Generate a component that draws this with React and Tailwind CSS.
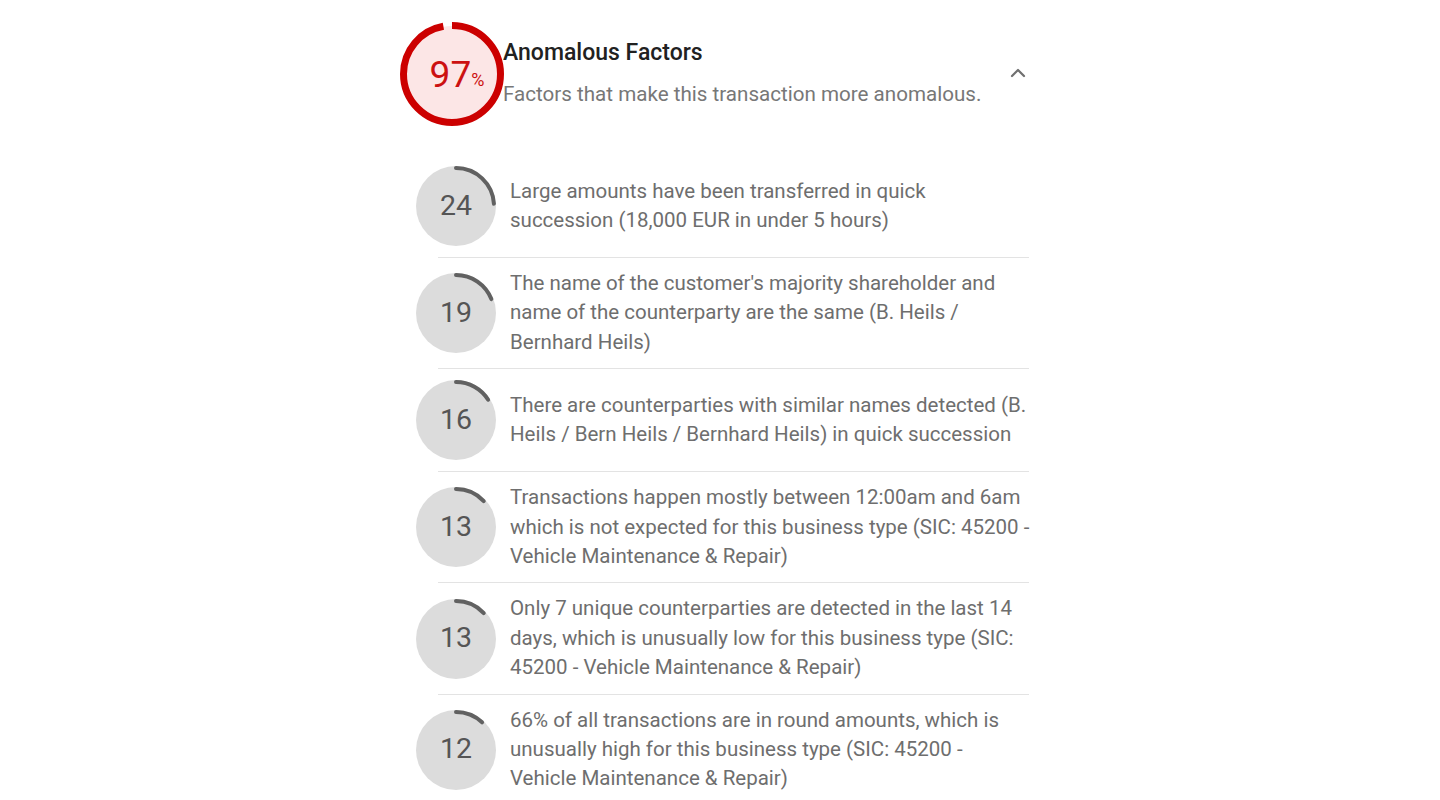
import { ChevronUp } from 'lucide-react';

const factors = [
  {
    score: 24,
    lines: ['Large amounts have been transferred in quick', 'succession (18,000 EUR in under 5 hours)'],
  },
  {
    score: 19,
    lines: [
      "The name of the customer's majority shareholder and",
      'name of the counterparty are the same (B. Heils /',
      'Bernhard Heils)',
    ],
  },
  {
    score: 16,
    lines: [
      'There are counterparties with similar names detected (B.',
      'Heils / Bern Heils / Bernhard Heils) in quick succession',
    ],
  },
  {
    score: 13,
    lines: [
      'Transactions happen mostly between 12:00am and 6am',
      'which is not expected for this business type (SIC: 45200 -',
      'Vehicle Maintenance & Repair)',
    ],
  },
  {
    score: 13,
    lines: [
      'Only 7 unique counterparties are detected in the last 14',
      'days, which is unusually low for this business type (SIC:',
      '45200 - Vehicle Maintenance & Repair)',
    ],
  },
  {
    score: 12,
    lines: [
      '66% of all transactions are in round amounts, which is',
      'unusually high for this business type (SIC: 45200 -',
      'Vehicle Maintenance & Repair)',
    ],
  },
];

const ScoreRing = ({ value }) => {
  const r = 38;
  const c = 2 * Math.PI * r;
  return (
    <div className="relative w-20 h-20 shrink-0">
      <svg width="80" height="80" viewBox="0 0 80 80" className="absolute inset-0">
        <circle cx="40" cy="40" r="40" fill="#dcdcdc" />
        <circle
          cx="40"
          cy="40"
          r={r}
          fill="none"
          stroke="#616161"
          strokeWidth="4"
          strokeLinecap="round"
          strokeDasharray={`${(c * value) / 100} ${c}`}
          transform="rotate(-90 40 40)"
        />
      </svg>
      <span className="absolute inset-0 flex items-center justify-center text-[28.5px] text-[#555]">
        {value}
      </span>
    </div>
  );
};

const TotalRing = ({ value }) => {
  const r = 48.5;
  const c = 2 * Math.PI * r;
  return (
    <div className="relative w-[104px] h-[104px] shrink-0">
      <svg width="104" height="104" viewBox="0 0 104 104" className="absolute inset-0">
        <circle cx="52" cy="52" r="48" fill="#fce6e6" />
        <circle
          cx="52"
          cy="52"
          r={r}
          fill="none"
          stroke="#cc0000"
          strokeWidth="7"
          strokeDasharray={`${(c * value) / 100} ${c}`}
          transform="rotate(-90 52 52)"
        />
      </svg>
      <div className="absolute inset-0 flex items-center justify-center pl-[10px] text-[#cc1111]">
        <span className="text-[37px] leading-none">{value}</span>
        <span className="text-[18px] leading-none mt-[12px]">%</span>
      </div>
    </div>
  );
};

const App = () => {
  return (
    <div className="min-h-screen bg-white font-['Roboto',sans-serif]">
      <div className="w-[640px] mx-auto pt-[22px]">
        <div className="flex items-center">
          <TotalRing value={97} />
          <div className="flex-1 -ml-px -mt-[2px]">
            <h2 className="text-[23px] leading-[28px] font-medium text-[#212121]">Anomalous Factors</h2>
            <p className="mt-[13px] text-[20.6px] leading-[28px] text-[#777] whitespace-nowrap">
              Factors that make this transaction more anomalous.
            </p>
          </div>
          <ChevronUp size={24} strokeWidth={2.25} className="text-[#707070] mr-[10px] -mt-[2px]" />
        </div>

        <div className="mt-[29px]">
          {factors.map((f, i) => (
            <div key={i}>
              {i > 0 && <div className="ml-[38px] mr-[11px] h-px bg-[#e3e3e3]" />}
              <div className="flex items-center gap-[14px] pl-4 py-[11px]">
                <ScoreRing value={f.score} />
                <p className="text-[20.5px] leading-[29.4px] text-[#6e6e6e] whitespace-nowrap">
                  {f.lines.map((line, j) => (
                    <span key={j} className="block">
                      {line}
                    </span>
                  ))}
                </p>
              </div>
            </div>
          ))}
        </div>
      </div>
    </div>
  );
};

export default App;
